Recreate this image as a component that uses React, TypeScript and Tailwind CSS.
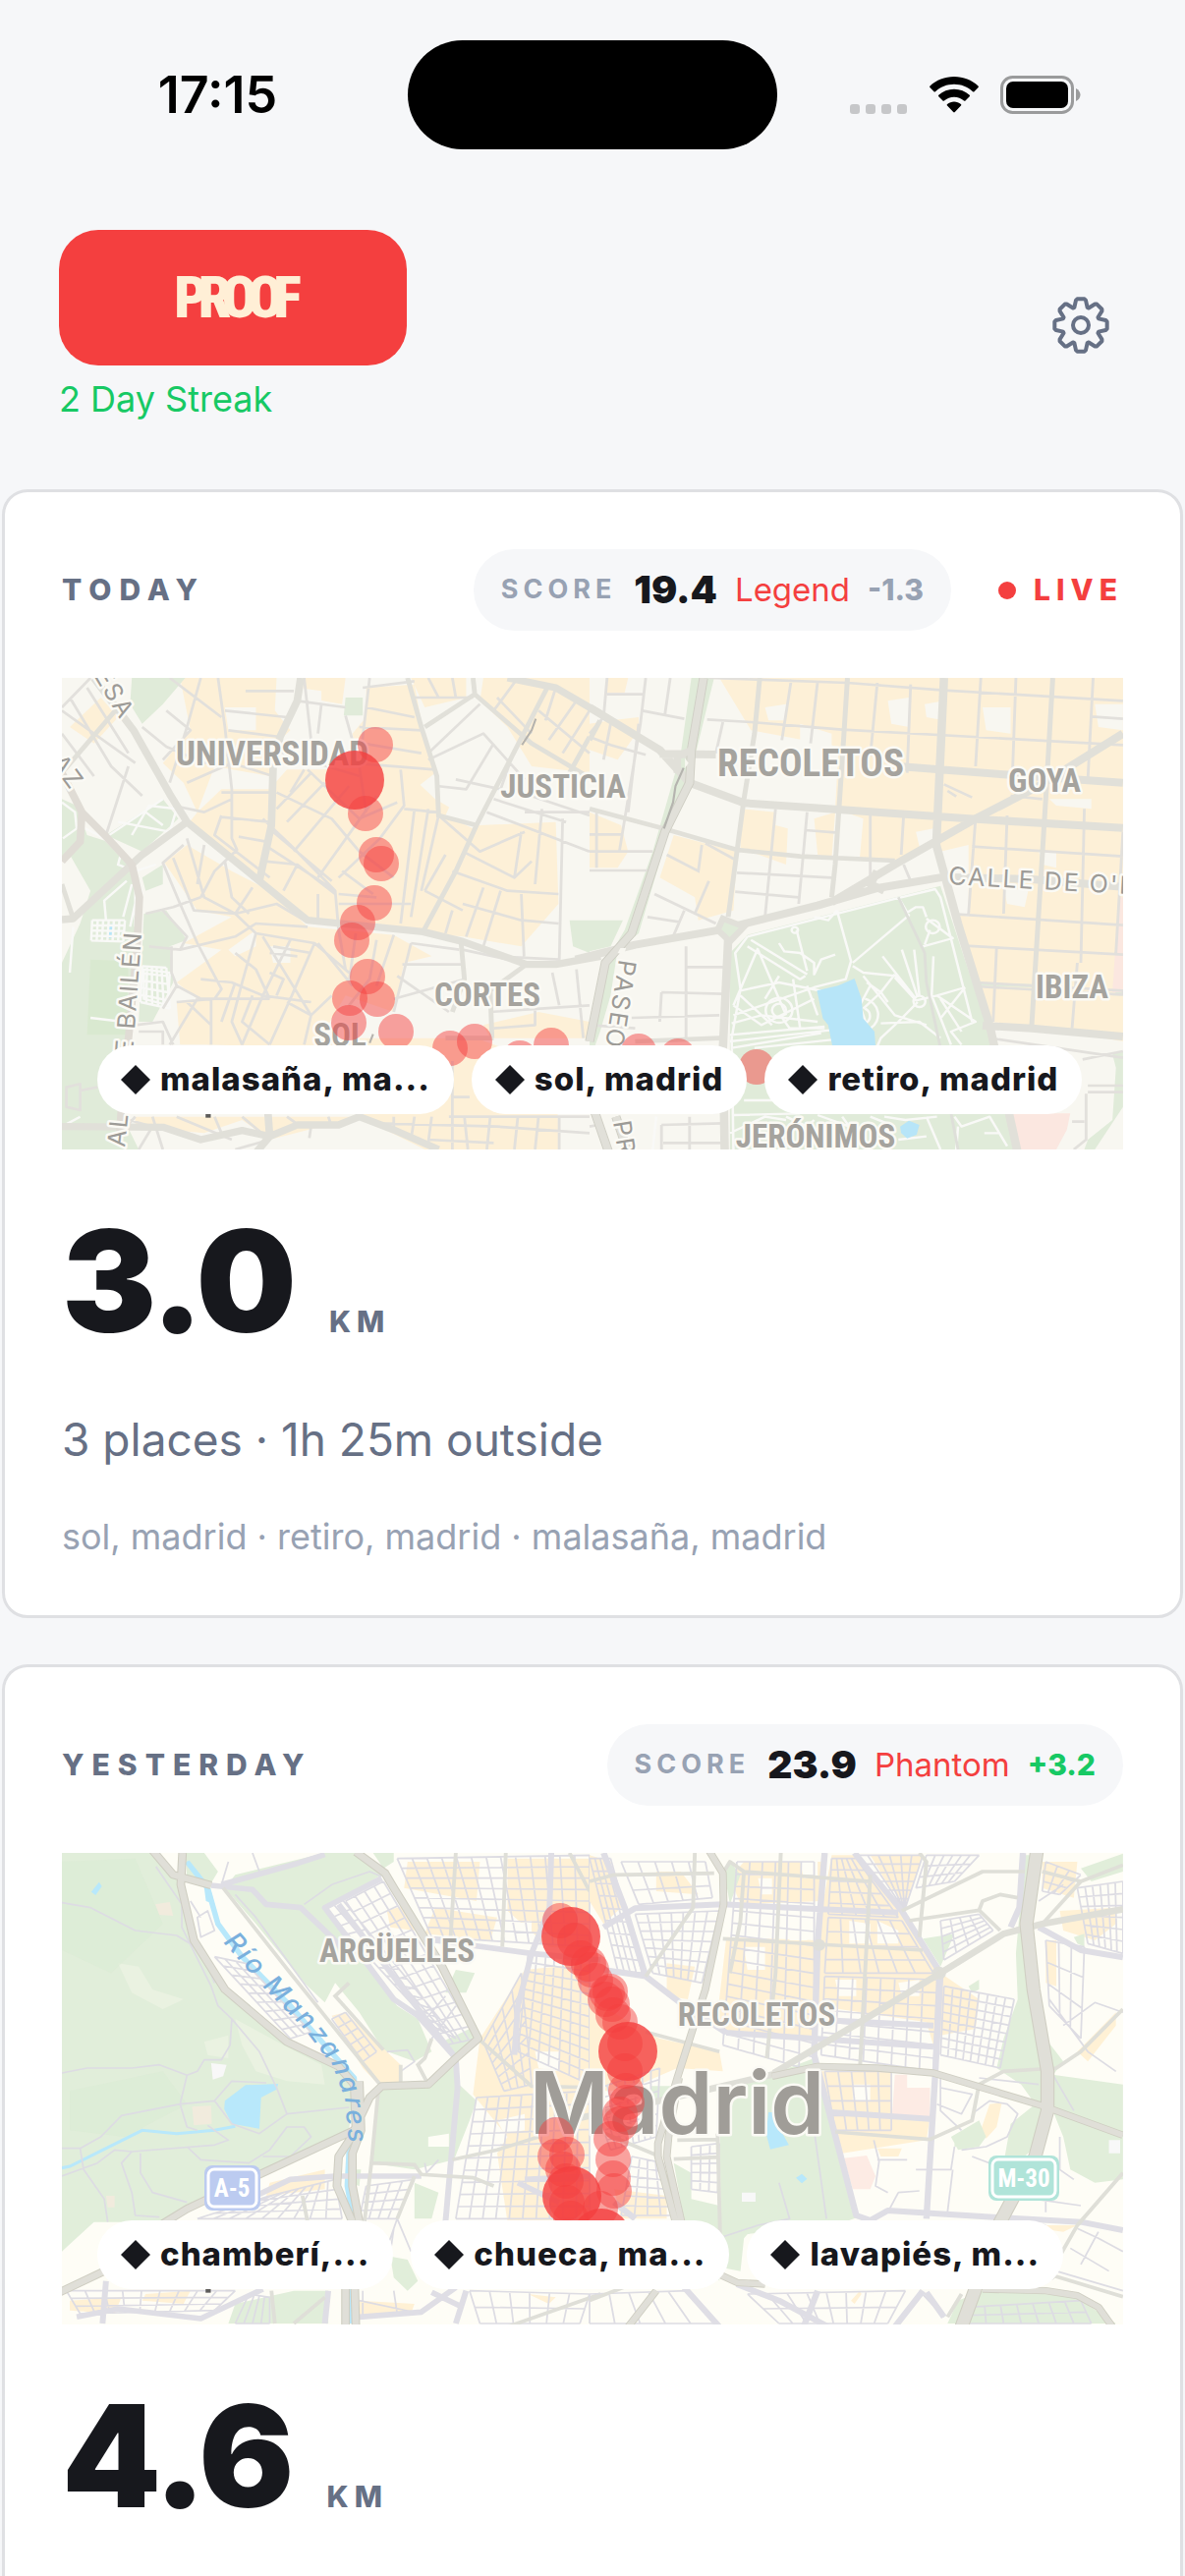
import React from "react";

type Pt = [number, number];
type Dot = [number, number, number];

/* Street grid inside a quadrilateral given clockwise from its top left corner. */
function grid(a: Pt, b: Pt, c: Pt, d: Pt, cols: number, rows: number) {
  const mix = (p: Pt, q: Pt, t: number) =>
    `${Math.round(p[0] + (q[0] - p[0]) * t)} ${Math.round(p[1] + (q[1] - p[1]) * t)}`;
  let out = "";
  for (let i = 0; i <= cols; i++) out += `M${mix(a, b, i / cols)}L${mix(d, c, i / cols)}`;
  for (let j = 0; j <= rows; j++) out += `M${mix(a, d, j / rows)}L${mix(b, c, j / rows)}`;
  return out;
}

function Gear() {
  const tooth: Pt[] = [[-20, -54], [-15, -76], [-11, -80], [11, -80], [15, -76], [20, -54]];
  const pts: string[] = [];
  for (let k = 0; k < 8; k++) {
    const t = (k * Math.PI) / 4;
    for (const [x, y] of tooth)
      pts.push(`${(x * Math.cos(t) - y * Math.sin(t)).toFixed(1)} ${(x * Math.sin(t) + y * Math.cos(t)).toFixed(1)}`);
  }
  return (
    <svg viewBox="-90 -90 180 180" className="size-[60px]" fill="none" stroke="#667085" strokeWidth="12" strokeLinejoin="round">
      <path d={`M${pts.join("L")}Z`} />
      <circle r="24" />
    </svg>
  );
}

const HALO = { stroke: "#fbfaf5", strokeWidth: 5, paintOrder: "stroke", strokeLinejoin: "round" as const };
const DISTRICT = "font-['Liberation_Sans_Narrow','Roboto_Condensed','Liberation_Sans',sans-serif] font-bold";

function District({ x, y, w = 33, children }: { x: number; y: number; w?: number; children: string }) {
  return (
    <text x={x} y={y} fontSize={w} textAnchor="middle" fill="#a5a39e" className={DISTRICT} {...HALO}>
      {children}
    </text>
  );
}

function Street({ id, d, size = 25, children, fill = "#9d9b97" }: { id: string; d: string; size?: number; children: string; fill?: string }) {
  return (
    <>
      <path id={id} d={d} fill="none" />
      <text fontSize={size} fill={fill} className="font-[Inter,sans-serif] tracking-[2px]" {...HALO}>
        <textPath href={`#${id}`}>{children}</textPath>
      </text>
    </>
  );
}

function Trail({ dots }: { dots: Dot[] }) {
  return (
    <g fill="#f43f3f">
      {dots.map(([x, y, r], i) => (
        <circle key={i} cx={x} cy={y} r={r} fillOpacity={r > 20 ? 0.8 : 0.48} />
      ))}
    </g>
  );
}

const CENTER_TRAIL: Dot[] = [
  [319, 68, 18], [309, 138, 18], [298, 104, 30], [320, 180, 18], [325, 189, 18], [318, 229, 18], [301, 249, 18],
  [295, 267, 18], [311, 304, 18], [293, 326, 18], [321, 327, 18], [292, 351, 18], [340, 360, 18], [395, 377, 18],
  [420, 370, 18], [466, 387, 18], [498, 374, 18], [587, 380, 18], [627, 385, 18], [707, 396, 18],
];

const CITY_TRAIL: Dot[] = [
  [507, 69, 18], [522, 89, 18], [518, 85, 30], [528, 107, 18], [536, 113, 18], [539, 119, 18], [543, 130, 18],
  [558, 141, 18], [553, 149, 18], [555, 143, 18], [560, 154, 18], [561, 165, 18], [568, 172, 18], [573, 194, 18], [576, 202, 30],
  [573, 222, 18], [574, 242, 18], [575, 254, 18], [568, 266, 18], [568, 276, 18], [559, 291, 18], [561, 312, 18], [561, 331, 18],
  [562, 344, 18], [548, 362, 18], [503, 287, 18], [502, 309, 18], [514, 307, 18], [510, 322, 18], [513, 334, 18],
  [519, 349, 30], [514, 356, 18], [518, 372, 18], [549, 392, 30],
];

const WEST = "scale(.35075 .33333)";
const EAST = "scale(.35714 .33333)";

function CenterMap() {
  return (
    <svg viewBox="0 0 1080 480" className="block h-auto w-full" role="img" aria-label="Route through central Madrid" fill="none">
      <rect width="1080" height="480" fill="#f8f7f1" />
      <g transform={`translate(-13 -10) ${WEST}`}>
        <g fill="#fdf0d7">
          <path d="M380 30H660L655 130L700 190L640 250V330L480 300L430 440L390 350L330 290L410 190Z" />
          <path d="M60 180L150 90L200 150L130 230Z" />
          <path d="M430 440L500 370L640 370L690 310L790 310L1020 300L1120 400L1250 480L1470 470L1478 720L1370 850L1200 820L1080 810L860 780L740 760L610 650L400 480Z" />
          <path d="M735 30H860L850 110L740 90ZM920 60L1060 50L1090 220L1120 320L1000 420L900 300L880 200L920 150Z" />
          <path d="M1050 30H1210V90L1090 120ZM1260 30H1568V320L1400 300L1330 180L1250 100Z" />
          <path d="M335 595L400 540L530 620L640 680L750 790L1000 815L1110 880L1030 900L1000 1050L860 1000L770 1160L460 1150L430 1010L370 960L500 860L390 840L530 760L430 740Z" />
          <path d="M700 1130H1240L1470 1220L1480 1470H1090L900 1370L640 1440L560 1380L450 1420L250 1400V1370H900Z" />
          <path d="M370 1020L470 1010V1150H380ZM1260 1090L1420 1050L1568 1080V1130H1280Z" />
        </g>
        <g fill="#f8f7f1">
          <path d="M510 120H600V190H520ZM720 60L790 70V140H730ZM1180 380L1260 410L1230 490L1150 450ZM1350 400L1430 390V440L1370 450ZM640 850H700V900H650ZM520 860L600 800V850L540 880Z" />
        </g>
        <g fill="#e0ebd9">
          <path d="M240 30H395L330 110L270 170L235 110ZM860 90H910V145H855ZM330 400L375 460L270 560L165 510Z" />
          <path d="M37 400L80 420L110 510L200 540L260 640L265 780L240 1080L200 1340L260 1470H37V900L90 780L120 680L60 570L37 580Z" />
          <path d="M270 640L330 600V660L280 680ZM275 750L340 740L400 830L350 850L360 960L300 1080L260 1080ZM1510 770H1568V870L1520 850Z" />
        </g>
        <path fill="#d9e9d0" d="M120 890L230 895L225 1120H110Z" />
        <path fill="#b7e5f8" d="M168 785L188 780V822L172 825Z" />
        <path
          stroke="#f9f9f7"
          strokeWidth="7"
          d={
            "M105 490L160 520L250 620L270 690M160 520L330 400M200 470L350 500L370 430L290 420L240 510M280 440L330 480M210 560L200 600L250 620M250 620L310 600M37 410L75 440L80 490L40 520M225 650L160 710L165 770M240 660L215 760M250 660V790M262 660L235 790M70 790L60 930M120 1068L215 1080M275 920L350 930L345 1030L275 1010ZM37 1400L90 1370" +
            grid([125, 770], [220, 770], [215, 835], [122, 832], 6, 4) +
            grid([270, 910], [340, 915], [350, 1040], [265, 1020], 5, 5)
          }
        />
        <path
          stroke="#e2e0dc"
          strokeWidth="8"
          strokeLinejoin="round"
          d={
            "M37 130L250 290M60 90L180 300L270 390M37 200L130 330M120 30L37 120M110 60L230 260M230 300L165 510M350 30L500 150M270 180L340 240L450 290L530 260M340 130L410 190L330 280M440 30L400 180L350 350M490 30L510 180L530 370V520L545 555L480 620L440 700M400 350L530 290L650 330M500 380L640 380M360 420L450 440L530 400M570 70H710M510 130L690 150M520 190L670 210M650 250L900 330M740 30L760 220M790 110L780 200M720 100L860 120M860 145L880 220M930 30L900 300L920 440M920 120L1060 150M910 60L1060 40M900 180L1080 190M910 230L1080 260M880 290L1120 310M750 310L900 460M660 380L820 460L900 560M620 460L700 540L830 680M760 320L660 430M800 350L690 470M870 360L710 560M950 390L780 640M1020 310L1030 420L960 520L840 640M1030 430L1125 440M900 460L1010 410M740 310L700 380M650 500L820 650M500 450L480 510L640 640M500 455L640 470M550 515L630 530M640 550L830 680L840 800M625 590L720 600L680 680M720 600L830 690M780 690V770M840 690L950 700M840 720H1050M900 560L1000 640M850 620L940 690M1060 430L1020 780M1100 430L1050 760M1130 450L1080 680M1150 570L1090 680M1090 680L1200 740M1170 620L1330 680L1478 690M1200 560L1350 640L1400 590M1130 450L1250 560L1380 500M1270 440L1568 560M1290 400L1500 470M1180 340L1310 370L1350 250M1125 360L1210 370L1290 230M1100 280L1260 200L1380 340M1060 90H1230M1100 30L1130 90M1170 30L1180 90M1250 110L1100 260M1300 90L1400 200M1360 30L1290 130M1420 130L1568 260M1470 60L1440 160M1530 100L1450 220M1568 130L1490 260M1370 380L1568 450M1380 440H1568M1370 500L1350 640M1430 430L1410 660M1490 460L1480 900M1200 720L1370 770L1478 780M1170 740L1150 810M1260 670L1210 820M1310 680L1260 850M1370 690L1378 880M1290 880L1480 890" +
            "M400 520L450 700L540 750L600 810L560 960L530 1080L560 1150M390 540L330 595L380 720L430 840L500 980L480 1010L370 1020M360 580L420 740L540 750L660 720L740 770M450 540L430 660M510 590L530 700L580 750M590 670L540 750M280 750L360 730L440 700M330 740L400 820L380 860L290 850M355 850V930L370 970L330 1040M380 860L540 820L600 780L750 790M600 810L770 840L870 930M620 820L760 1060L820 1000M700 830L620 1000L560 1150M770 840L700 1010L640 1150M780 840L880 970M840 800L860 920M890 810L870 960M950 830L930 950L870 1030M1000 815L950 970M540 870L600 920L640 1010M440 950L530 960L620 1000L760 1020M640 930L680 950L660 1000M370 970L440 1010L640 1010M470 1010V1150M430 1010L350 1150M400 1020L470 1090M590 1000L560 1080L640 1150M540 960L500 1080M640 870L720 880M650 850L760 870M690 1020L760 1060L740 1150M250 1090L330 1080L360 1150M260 1110H330V1150M1050 840L1000 1050M1050 840L1190 860M1025 905H1200M1010 940L1160 1050M1205 950L1000 1010M1200 860L1330 890M1280 1050L1568 1030M1410 980V1090L1290 1100M1460 930L1480 1030M1530 920L1550 1130" +
            "M250 1370L190 1440M200 1370L300 1400L260 1470M300 1370L330 1470M370 1370L530 1440M480 1370L500 1420M560 1370L640 1440M690 1370L730 1400M640 1440L540 1470M760 1400L755 1435M810 1370L820 1400M1000 1370V1410M1060 1370L1050 1440M1110 1370L1100 1450M950 1390L1300 1400L1568 1420M1170 1200V1470M1205 1370L1215 1470M1160 1370L1568 1370M1170 1310H1220M1280 1370L1270 1470M1360 1370L1350 1470M1420 1370L1410 1470M1480 1370V1470M1100 1440L1290 1450M50 1280L90 1270V1350L50 1340ZM90 1290L140 1280"
          }
        />
        <path
          stroke="#e1e0d9"
          strokeWidth="22"
          strokeLinejoin="round"
          d="M130 30L245 190L350 385L400 470L610 650L750 770L1085 805L1200 835L1385 905L1470 905L1600 880M730 30L720 100L670 210L650 300L645 480L610 650M400 470L270 570L70 765L37 768M37 1400L330 1402L440 1440L560 1412L640 1430L720 1395L840 1395L900 1370L1000 1410L1130 1470M1330 30L1470 60L1600 140M635 1360L640 1430L600 1480"
        />
        <path
          stroke="#e1e0d9"
          strokeWidth="14"
          d="M1040 30L1080 180L1125 330L1130 450L1240 480M1450 50L1240 480L1180 620L1085 805M1230 30L1235 80L1400 230L1560 330M1235 80L1090 180M1195 835L1205 950L1170 1050M1280 990L1285 1130M1385 905L1280 985M1568 210L1510 320M200 120L37 320M37 660L70 765M1150 1130H1290"
        />
        <path stroke="#e0dcd5" strokeWidth="22" d="M37 320L95 440L170 520L240 600L262 700L255 850L235 1080L210 1340L205 1420M95 440L90 530L37 590" />
        <path stroke="#b5b3ae" strokeWidth="6" d="M1412 155L1400 190L1372 235M940 1118L930 1145" />
        <path fill="#5d5c5a" d="M454 1360H469V1373H454Z" />
      </g>
      <g transform={`translate(537 -10) ${EAST}`}>
        <g fill="#fdf0d7">
          <path d="M370 30H1520V1140L1250 1090L1130 1080L1050 750L985 540L860 590L770 580L780 460L700 430L710 240L460 190Z" />
          <path d="M240 510L420 560L410 740L310 770L300 700L200 640ZM430 430L530 440V480L565 490L560 600L430 550ZM640 460L700 440L690 580L650 570Z" />
          <path d="M50 30H110L100 75H50ZM0 170L60 160L140 150V190L80 280L0 250ZM0 440L90 480L110 560L80 610H0Z" />
        </g>
        <g fill="#f8f7f1">
          <path d="M955 110L1010 100V160L960 150ZM1120 120H1200V200L1130 190ZM1310 400H1430V430L1330 420ZM850 100L910 90V180L860 170ZM600 170L690 200V240H600ZM930 500L980 490V540L940 545ZM1440 110H1520V190L1450 180ZM1180 670L1250 680L1240 730L1190 720ZM1280 560L1330 560V610L1290 600ZM1000 560L1080 540V760L1050 750ZM500 120L560 110V160H510Z" />
        </g>
        <g fill="#e0ebd9">
          <path d="M290 30H355L305 250L225 500L140 810L80 860L60 1000L30 1110L0 1200V1100L45 900L100 800L180 560L260 260Z" />
          <path d="M0 770H95L60 850L0 865ZM450 815L1000 665L1150 1150L1230 1470H400V870ZM1100 960L1260 965V975L1100 970ZM1500 990H1520V1000H1490ZM1490 1180L1520 1170V1340L1440 1470H1410L1420 1440L1490 1380L1500 1220Z" />
        </g>
        <path fill="#fbe7e0" d="M1205 1360H1370L1360 1410L1330 1470H1225ZM1508 700H1520V990H1490Z" />
        <path
          stroke="#f9f9f7"
          strokeWidth="7"
          strokeLinejoin="round"
          d={
            "M450 820L870 705L985 675L1000 700L1090 1080M450 820L415 870L430 980L405 1130L410 1470M705 740L745 895L730 950L640 975L410 1060M750 900L910 755L880 700M900 750L930 730H950L960 760M950 850L1035 825L960 765M955 845L970 800M460 830L620 935M480 855L410 1030M480 860L560 1060M450 850L600 950L615 940M540 840L555 865L600 870L640 900L640 935L660 890L700 875M590 800L620 925M640 760L680 770L705 740M750 910L780 930L875 940L930 1010M870 935L830 990L790 960M780 1040L830 990L850 1020M835 880L930 1010M890 860L935 1005M925 860L940 1000M870 945L930 1015L990 1000L1070 975M800 970L770 1030L790 1090M780 940L870 1060L960 1090M830 1085L940 1080L1000 1130M990 1000L1100 1080L1030 1110L1060 1150M980 880L975 1000L1030 1150M935 1020L880 1080L830 1130L820 1155M1000 1010L1060 1110M1070 975L1000 1070" +
            "M430 985L540 960L680 990M405 1085L490 1060L650 1080M410 1030L490 1090L640 1010M430 1000L520 1090M500 1010L540 940M580 950L600 1100M550 1070L570 1100H670M620 970L650 1060M400 1120L670 1095M400 1140L690 1105M405 1160L660 1115M470 1160L690 1135M410 1365L600 1360M440 1320H560M560 1370L620 1400L640 1380M650 1365L740 1400L720 1370M800 1370L870 1400M840 1370L900 1380L990 1370M1040 1370L1060 1400L1140 1370L1190 1460M1125 1420H1165M1050 1400L1045 1470M960 1370L1000 1470M880 1440L960 1430M190 1370L180 1470M400 1420L500 1370L560 1380"
          }
        />
        <g stroke="#f9f9f7" strokeWidth="7">
          <circle cx="940" cy="1018" r="17" />
          <circle cx="978" cy="790" r="20" />
          <circle cx="540" cy="1045" r="20" />
          <circle cx="540" cy="1045" r="38" />
          <circle cx="585" cy="800" r="9" />
          <path d="M785 1040A25 25 0 0 1 785 1085M785 1010A50 50 0 0 1 800 1100" />
        </g>
        <path fill="#b7e5f8" d="M648 985L708 970L755 948L775 1010L780 1070L812 1110L815 1155H692L680 1090L665 1070ZM885 1400L910 1382L940 1395L932 1425L905 1436L888 1420Z" />
        <path
          stroke="#e2e0dc"
          strokeWidth="8"
          d={
            "M340 30L735 45L1010 68L1520 100M335 157L460 165L720 188L1520 235M575 35L548 220M650 40L630 230M820 45L800 270M915 50L905 320M1115 30L1100 300M1215 30L1205 330M1435 30L1420 340M530 430L500 760M620 440L596 720M800 440V640M895 450L888 570M420 625L690 640M415 683L595 700M615 495L700 502M380 165L360 260M1190 450L1180 750M1100 460L1080 750M1410 430L1400 900M1520 500L1500 870M1090 545L1520 575M1050 752L1520 785M1070 848L1520 875M1160 850L1150 1080M1390 900L1375 1100M1200 390L1290 400M1010 355L1090 395M1020 375L1045 392M1430 148L1520 155M320 540L310 620L220 570M330 535L415 585M340 650L300 750M185 690L360 780M165 760L255 775M270 740L240 815M0 560H180M0 618H165M0 508H95M20 440V610M50 30L40 150L0 200M160 30L145 170L85 560M230 30L215 140M50 80H155M150 130L270 155M0 210L60 235L160 265M60 170L40 280M140 170L110 440M275 850V1140M275 913H385M205 990L380 995M205 990L200 1080M120 1068L370 1060M0 1090L130 1100M205 1395L380 1390M210 1450H380M205 1395V1470M285 1370V1470M0 1400L25 1395M1405 1195L1520 1170M1420 1275H1520M1420 1295H1520M1415 1300V1440L1380 1470M1375 1385H1410M895 600L915 650M1140 1130L1520 1190" +
            grid([1100, 960], [1520, 985], [1520, 997], [1100, 972], 1, 1)
          }
        />
        <path stroke="#dedfd9" strokeWidth="8" d="M880 700L955 870L960 960L1000 1160M1030 1360L1050 1470" />
        <path stroke="#e1e0d9" strokeWidth="14" d="M485 30L470 200L440 400L395 760M735 30L722 250L700 600L690 700M1320 30L1300 400L1260 1090M0 430L210 490L420 555L600 575L870 588M0 220L30 160M130 1140L370 1130" />
        <path
          stroke="#e1e0d9"
          strokeWidth="24"
          strokeLinejoin="round"
          d="M0 120L200 250L285 350L440 412L710 432L1080 460L1520 488M200 262L360 264M880 300L1180 325L1520 350M-40 890L130 845L370 800L650 725L820 672L1010 638L1260 645L1520 668M690 715L870 600L1100 460L1280 360L1520 200M1010 30L988 540L1050 780L1140 1090L1220 1480M395 830L380 1160L385 1470M1120 1092L1260 1100L1520 1125M820 620L800 660L840 680"
        />
        <path stroke="#cfcec4" strokeWidth="26" d="M325 30L290 250L285 350L215 500L120 810L45 900L0 1140M0 1310L55 1480M75 1370L110 1480" />
        <path stroke="#e1e0d9" strokeWidth="21" d="M325 30L290 250L285 350L215 500L120 810L45 900L0 1140M0 1310L55 1480M75 1370L110 1480M250 270L290 250M250 320V270" />
        <path fill="#e0ebd9" stroke="#e1e0d9" strokeWidth="18" d="M365 800L380 765L440 790L400 835Z" />
        <path stroke="#b5b4af" strokeWidth="6" d="M268 305L245 360L238 410L212 490" />
        <path fill="#f8f7f1" d="M88 855H104L98 875L80 870ZM272 275L282 290L272 305Z" />
      </g>
      <District x={214} y={89} w={35}>UNIVERSIDAD</District>
      <District x={510} y={122}>JUSTICIA</District>
      <District x={762} y={100} w={39}>RECOLETOS</District>
      <District x={1000} y={116}>GOYA</District>
      <District x={1028} y={326}>IBIZA</District>
      <District x={433} y={334}>CORTES</District>
      <District x={283} y={375}>SOL</District>
      <District x={767} y={478}>JERÓNIMOS</District>
      <Street id="odonnell" d="M902 210L1120 222">CALLE DE O'DONNELL</Street>
      <Street id="paseo" d="M567 286L549 400">PASEO</Street>
      <Street id="prado" d="M561 452L575 540">PRADO</Street>
      <Street id="bailen" d="M72 384L84 220">E BAILÉN</Street>
      <Street id="bailen-south" d="M64 478L72 400">AL</Street>
      <Street id="princesa" d="M22 -20L86 88">CESA</Street>
      <Street id="ferraz" d="M-12 86L20 130">AZ</Street>
      <Trail dots={CENTER_TRAIL} />
    </svg>
  );
}

function CityMap() {
  return (
    <svg viewBox="0 0 1080 480" className="block h-auto w-full" role="img" aria-label="Route across Madrid" fill="none">
      <rect width="1080" height="480" fill="#fefdf6" />
      <g transform={`translate(-13 -11) ${WEST}`}>
        <g fill="#e1eeda">
          <path d="M37 33H310L380 120L400 230L440 330L500 450L690 610L830 690L885 740L870 880L600 1010L330 1160H130L37 1250Z" />
          <path d="M395 33H450L490 90L470 125L400 110ZM540 100L800 33H890L965 100L800 200L890 340L1010 500L1070 540L1110 640L1060 670L970 635L900 520L830 430L800 490L740 430L600 250L510 140Z" />
          <path d="M960 750L1100 740L1180 680L1190 740L1240 790L1220 850L1175 970L1060 1000L935 980ZM1140 610L1240 560V600L1180 650ZM1060 1040L1130 1070L1110 1150H1060ZM710 1370H810V1470H520L540 1410ZM990 1265L1040 1275L1070 1340L1040 1370L1000 1330ZM1180 390L1235 400L1210 460H1150Z" />
          <path d="M940 33H1000V60L970 80ZM885 1000L905 1000L900 1050L870 1040Z" />
        </g>
        <path fill="#eaf2e1" d="M540 540L680 620L790 680L800 740L690 730L600 700L560 620ZM200 370L260 380L300 450L390 480L330 510L240 460ZM450 610L520 590V660L460 650Z" />
        <path fill="#d9ebd3" fillOpacity=".5" d="M37 60L250 50L330 250L180 400L37 330ZM60 760L330 700L400 800L220 900L60 880Z" />
        <g fill="#fff1d5">
          <path d="M1040 60H1250L1240 180L1030 140ZM1120 200L1300 230L1280 300L1090 280ZM1330 50H1568V330L1450 320L1330 210ZM980 210L1040 190L1060 270L990 260Z" />
          <path d="M1250 600L1330 470L1380 390L1568 370V1160H1330L1300 950L1330 900L1230 770Z" />
          <path d="M820 530L860 520L1020 680V735H950L910 690ZM640 1040L800 1000V1060L630 1080ZM280 1380L410 1370L390 1410L270 1400ZM60 1400L210 1390L190 1440L60 1430ZM900 1400L1060 1410L1050 1440L900 1450ZM1390 1380L1470 1390L1450 1410Z" />
        </g>
        <path fill="#fefdf6" d="M1350 250L1400 240V330L1360 320ZM1410 640L1480 640V700L1420 690ZM1300 850L1380 830V880L1320 890ZM1100 900L1160 890V930H1100Z" />
        <path fill="#f1ebdd" d="M308 190L350 183L360 225L320 222ZM415 808L470 805L472 860L420 865ZM165 1080L190 1080V1115H170Z" />
        <path fill="#f8f8f8" d="M470 675L515 680L505 715L475 725Z" />
        <g stroke="#b8e8fb">
          <path strokeWidth="16" strokeLinejoin="round" d="M400 60L460 140L490 250L560 350L700 500L800 620L885 720L890 860L870 950L865 1050L885 1160L880 1300L876 1470" />
          <path strokeWidth="9" d="M37 995L60 990L270 880L370 890L480 880L540 868" />
          <path fill="#b8e8fb" stroke="none" d="M510 790L570 742L665 738L660 755L615 780L610 875L530 860L508 815ZM122 152L145 122L153 135L135 162ZM398 55L425 85L470 150L480 190L455 180L450 140Z" />
        </g>
        <path
          stroke="#dddce3"
          strokeWidth="5"
          strokeLinejoin="round"
          d={
            "M37 185L120 200L250 270L370 285L440 330M310 75L385 190V260L470 440L490 500L530 540L525 620L500 665L450 665L430 700L400 712L320 680L240 690L110 690L37 705M530 540L610 640L660 750L690 830L870 810M400 712L380 800L210 835L150 900L90 935L37 935M380 800L480 790L530 730L630 735M380 800L400 870L430 880M480 790L530 860L610 890L690 830M37 1020L140 980L190 940L240 945L480 925L520 910L460 865M240 945L210 980L240 1070L250 1140L320 1145M265 950V1010L300 1070L400 1100M90 935L100 1000L160 1090L170 1160M400 930L440 970L580 980L640 940L690 870L740 870L760 900L700 960L620 960M540 160L600 230L780 490M740 190L820 130L930 90L965 105M500 130L520 60M590 33L610 90M430 230L460 210L480 270L440 290ZM440 330L480 430M410 180L440 230" +
            grid([800, 205], [850, 175], [1180, 600], [1110, 560], 2, 14) +
            grid([860, 180], [970, 120], [1240, 600], [1150, 620], 4, 13) +
            grid([1010, 50], [1568, 40], [1568, 320], [1110, 290], 13, 8) +
            grid([1390, 340], [1568, 360], [1568, 740], [1360, 640], 7, 11) +
            grid([1260, 610], [1370, 400], [1400, 740], [1320, 760], 4, 7) +
            grid([1240, 780], [1568, 760], [1568, 1150], [1180, 1150], 10, 10) +
            grid([480, 350], [570, 370], [760, 580], [700, 600], 3, 9) +
            grid([820, 540], [860, 520], [950, 640], [910, 670], 2, 5) +
            grid([640, 1080], [830, 1030], [850, 1150], [430, 1150], 9, 4) +
            grid([50, 1370], [540, 1370], [480, 1430], [90, 1440], 9, 3) +
            grid([920, 1050], [1060, 1030], [1010, 1150], [900, 1150], 4, 4) +
            grid([1220, 1370], [1568, 1380], [1540, 1470], [1250, 1470], 6, 2) +
            grid([580, 1380], [640, 1390], [640, 1470], [540, 1470], 4, 1) +
            "M980 640L1040 635L1060 670L1020 700M1085 550L1150 470M1110 600L1180 500M900 1400L1080 1440M910 1370V1450M1000 1370L1010 1440M1010 1150L960 1300M1010 1150L1050 1250M1000 1180L985 1290M1090 980L1095 1010L1130 970"
          }
        />
        <path
          stroke="#dfdee5"
          strokeWidth="17"
          strokeLinejoin="round"
          d="M470 132L590 145L630 190L730 200L820 290L870 350M965 110L800 200L1000 480L1070 530L1180 660L1185 750L1150 1160M840 190L1180 660M1457 33L1452 200L1400 340L1360 500L1350 650M1120 300L1400 340L1600 360M500 130L720 65L800 38M600 1080L700 1030L830 1020L1080 1020M80 1450L200 1425L440 1455L530 1410L620 1365M165 1340L155 1470M810 1370L800 1470M900 1450L1080 1435L1180 1360M1210 1370L1180 1470M1110 1375L1190 1415M1380 1030L1568 1020M1360 1040L1480 1100"
        />
        <path
          stroke="#dfdfd8"
          strokeWidth="11"
          d="M505 140L700 400L960 740M1245 600L1400 745L1600 750M1180 33L1165 290M1325 33L1315 320M1510 33L1568 150M870 430L830 470L970 635M1110 600L1090 660L1070 680L1100 740M1020 735V680M955 760L935 980L915 1160M935 980L1060 985L1080 1015L1230 1025L1290 1050M1060 1020L1010 1150M1170 970L1300 940L1420 900M645 1370L655 1470M735 1080L750 1160M1600 1380L1330 1480M710 1470L800 1390"
        />
        {["#cfcec2", "#e0dfd8"].map((c, i) => (
          <path
            key={c}
            stroke={c}
            strokeWidth={i ? 19 : 25}
            strokeLinejoin="round"
            d="M300 25L360 100L470 132M387 33L382 130L420 300L510 450L690 610L840 685L885 740L890 880L840 960L835 1050L880 1160L860 1300V1480M30 1375L200 1290M330 1165L400 1120L600 1020L885 880L930 780L965 745L1100 740L1180 660L1245 600L1140 380L1000 140L975 95L890 30M900 730L905 880L880 950V1050L900 1160L885 1300L890 1480"
          />
        ))}
        <path fill="#5d5c5a" d="M454 1360H469V1376H454Z" />
      </g>
      <g transform={`translate(537 -11) ${EAST}`}>
        <g fill="#fff1d5">
          <path d="M440 60H660V180L430 190L400 110ZM690 40H770L890 220L1000 400L1110 480L1100 570L1000 590L985 640L960 550L650 500L640 600L360 570L390 290L650 300L660 215Z" />
          <path d="M540 380H640V590L540 580ZM660 700H860V830L970 840L960 910L720 950L690 830ZM190 90H260L310 160L190 150ZM0 40L60 60L90 200L40 250L0 180ZM800 40H950L900 190L850 130Z" />
          <path d="M0 480L200 600L370 640L380 700L250 690L100 760L0 760ZM70 1060L220 1080V1150H90ZM1290 60H1390L1380 170L1290 140ZM1300 300H1330V440L1300 430ZM1140 800L1175 795L1160 870L1130 905L1115 880ZM1390 640L1500 520L1500 560L1420 670ZM745 1400L770 1370L775 1380L755 1410ZM1220 1170L1390 1170L1350 1190ZM400 400H440V580H390ZM220 370L300 380L280 480L220 470ZM1340 210L1500 200V250L1440 300L1350 270ZM820 935H890L880 960H830Z" />
        </g>
        <path fill="#fefdf6" d="M480 110H520V160H490ZM560 240H620V300H570ZM740 240L800 250V310H740ZM700 420H760V470H710ZM440 320H500V390H450ZM880 430L940 420V470H890ZM600 60H650V110H610ZM820 240L880 270V310H820ZM750 740H800V790H750Z" />
        <g fill="#e1eeda">
          <path d="M370 770L640 660L765 1145L700 1170L375 1205ZM240 980L290 1010V1090L370 1110V1340L270 1160ZM175 745H235V800L180 790ZM400 60L430 100L400 190L385 100Z" />
          <path d="M1240 40H1260L1230 260L1300 600L1350 670L1300 740V900L1240 960L1180 980L1200 860L1270 800L1230 740L1160 690L1180 600L1220 480L1215 340Z" />
          <path d="M1320 710L1520 740V1030L1440 1040L1370 1000L1350 900L1320 820ZM950 295L1040 280L1000 380ZM1400 80L1520 35V90L1430 120ZM1080 440L1110 420V450L1090 460ZM1040 900L1120 880L1100 930L1040 930ZM380 1205L480 1160L440 1210L430 1310L380 1300ZM1120 1370L1380 1385L1500 1470H1020L1050 1400ZM1030 900L1110 850L1130 900L1110 930L1050 940ZM1380 290L1410 280V320L1390 310Z" />
        </g>
        <path fill="#fdebe4" d="M870 710H905V750H970V838H862ZM725 965L790 957L815 1020L800 1060H750Z" />
        <path fill="#b8e8fb" d="M510 825H545L550 890L568 925L515 938L503 890ZM588 1025L605 1013L620 1028L605 1042Z" />
        <path fill="#f8f8f8" d="M434 1070H473V1098H434ZM1480 910H1512V950H1480Z" />
        <path
          stroke="#dddce3"
          strokeWidth="5"
          strokeLinejoin="round"
          d={
            grid([420, 60], [640, 60], [640, 700], [380, 620], 6, 15) +
            grid([690, 50], [760, 50], [880, 230], [680, 220], 5, 5) +
            grid([680, 230], [890, 240], [980, 400], [670, 400], 6, 4) +
            grid([670, 410], [990, 420], [980, 700], [660, 650], 8, 7) +
            grid([670, 700], [860, 700], [860, 880], [700, 880], 5, 4) +
            grid([760, 40], [950, 40], [900, 200], [890, 200], 6, 6) +
            grid([960, 40], [1110, 40], [1040, 120], [930, 140], 6, 3) +
            grid([90, 60], [330, 60], [350, 170], [140, 190], 5, 3) +
            grid([130, 220], [370, 210], [320, 430], [180, 400], 7, 7) +
            grid([0, 50], [60, 50], [150, 400], [80, 390], 4, 9) +
            grid([1010, 440], [1210, 480], [1170, 690], [1000, 650], 8, 8) +
            grid([1000, 240], [1110, 220], [1150, 270], [1010, 360], 4, 5) +
            grid([1300, 60], [1400, 100], [1340, 160], [1290, 150], 3, 3) +
            grid([1390, 140], [1520, 120], [1520, 340], [1420, 310], 6, 6) +
            grid([1300, 300], [1410, 320], [1400, 600], [1310, 500], 3, 3) +
            grid([0, 760], [200, 690], [190, 900], [60, 940], 8, 6) +
            grid([120, 960], [210, 980], [240, 1140], [90, 1140], 4, 6) +
            grid([290, 930], [370, 920], [365, 1070], [290, 1060], 3, 5) +
            grid([1080, 1420], [1400, 1400], [1430, 1470], [1080, 1470], 7, 2) +
            grid([450, 1380], [900, 1370], [850, 1470], [540, 1470], 8, 2) +
            grid([0, 1380], [280, 1370], [360, 1470], [0, 1470], 5, 1) +
            "M1000 720V820L1060 880M1000 750L1090 770L1060 830L990 800M1110 720L1280 740M1090 830L1140 790L1190 800L1220 830L1190 900L1130 930L1060 940M1320 710L1380 820M1340 900V1000L1380 1030M1090 960L1140 980M820 970H905M810 910L825 975L815 1050L850 1070M930 1000H1030L1040 930M1035 1000L1020 1130M880 1070L940 1065M880 1070L855 1120M1270 1090L1400 1110M1300 1090V1130M1390 1180L1450 1210L1520 1250M1370 1240L1480 1310M1450 1190L1400 1290M1330 1310L1520 1370M1310 480L1420 640L1500 700M1350 560L1440 490L1520 520M540 1040L570 1150L480 1170L380 1205M640 880L675 1150M1280 180L1350 130M940 1370L1010 1450M1300 1170L1230 1150"
          }
        />
        <path
          stroke="#dfdee5"
          strokeWidth="18"
          strokeLinejoin="round"
          d="M40 260L130 202L380 190L660 205L880 215M670 33L650 310L640 650L760 1140L800 1155L850 1125L1150 1145L1400 1160L1520 1185M755 33L890 210L1000 400L985 710L960 1150M390 582L640 600L980 625M700 545L980 560M40 33L100 200L160 410L270 500L390 582M40 390L160 410M690 825L970 845M1235 33L1225 200L1200 260M1280 260L1400 330L1520 352M420 1350L540 1400L680 1480M270 1360L370 1480M650 1370L610 1480M950 1370L870 1480M960 1375L1010 1450M70 1100L130 1150"
        />
        <circle cx="654" cy="314" r="18" fill="#dfdfda" />
        <circle cx="996" cy="400" r="20" fill="#dfdfda" />
        <path
          stroke="#dfdfd8"
          strokeWidth="11"
          strokeLinejoin="round"
          d="M300 33L295 200L160 410M0 120L70 100L355 95M380 95L400 60L440 90L800 120M440 90L430 240L400 400M545 33L530 400L505 660M800 100L785 400L770 700M380 295L650 312L950 330M700 885L970 908L1090 850L1110 740L1180 700L1330 690L1400 640L1520 510M940 33L960 60L940 290M910 240L1110 208L1170 270M1110 208L1120 180L1170 160L1220 170M890 210L1120 90L1240 90M1290 90L1400 120L1520 70M1400 120L1290 250M160 580L370 640M250 910L365 908M240 968L370 962M365 890L375 1330M0 870L200 960M1520 1010L1390 1170L1310 1320L1520 1388M1180 280L1225 262M1020 1450L1060 1380M0 1400L120 1350"
        />
        <path stroke="#dfdfd8" strokeWidth="20" d="M525 705L770 550L1000 400L1180 280L1290 250L1520 205M-60 850L200 790L540 705" />
        {["#cfcec2", "#e0dfd8"].map((c, i) => (
          <g key={c} stroke={c} strokeLinejoin="round">
            <path
              strokeWidth={i ? 17 : 22}
              d="M340 25L380 95L382 190L330 450L250 720L195 920V960L245 1160M255 720L225 900L220 960L262 1160M520 715L650 685L820 690L980 705L1290 805L1520 895M350 1310L420 1345L500 1350M190 1370L110 1480M1120 1365L1300 1370L1390 1385L1450 1420L1490 1480"
            />
            <path strokeWidth={i ? 34 : 40} d="M1275 25L1245 250L1265 450L1305 700V820L1270 960L1170 1160L1060 1480" />
          </g>
        ))}
        <circle cx="1315" cy="1324" r="10" fill="#fefdf6" stroke="#dfdfd8" strokeWidth="6" />
      </g>
      <District x={341} y={111}>ARGÜELLES</District>
      <District x={707} y={176}>RECOLETOS</District>
      <path id="manzanares" d="M164 91L204 136L248 181L276 218L288 250L294 320" />
      <text fontSize="27" fill="#7ab0dd" className="font-[Inter,sans-serif] font-medium italic tracking-[3px]">
        <textPath href="#manzanares">Río Manzanares</textPath>
      </text>
      <text x="626" y="286" fontSize="88" textAnchor="middle" fill="#a09d98" className="font-[Inter,sans-serif] font-semibold" {...HALO}>
        Madrid
      </text>
      <g className={DISTRICT} fontSize="25" textAnchor="middle">
        <rect x="145" y="318" width="57" height="46" rx="8" fill="#bccbf0" />
        <rect x="149" y="322" width="49" height="38" rx="6" stroke="#fff" strokeWidth="3" />
        <text x="173" y="350" fill="#fff">A-5</text>
        <rect x="943" y="308" width="72" height="46" rx="8" fill="#b0e4d9" />
        <rect x="947" y="312" width="64" height="38" rx="6" stroke="#fff" strokeWidth="3" />
        <text x="979" y="340" fill="#fff">M-30</text>
      </g>
      <Trail dots={CITY_TRAIL} />
    </svg>
  );
}

function Chip({ children }: { children: string }) {
  return (
    <li className="flex h-[70px] items-center gap-[10px] rounded-full bg-white px-6 text-[33px] font-extrabold tracking-[1px] whitespace-nowrap text-[#17181d]">
      <svg viewBox="0 0 30 30" className="size-[30px] shrink-0" aria-hidden="true">
        <path d="M15 0L30 15L15 30L0 15Z" fill="#17181d" />
      </svg>
      {children}
    </li>
  );
}

type DayProps = {
  title: string;
  score: string;
  rank: string;
  delta: string;
  up?: boolean;
  live?: boolean;
  map: React.ReactNode;
  chips: string[];
  km: string;
  className: string;
  children?: React.ReactNode;
};

function DayCard({ title, score, rank, delta, up, live, map, chips, km, className, children }: DayProps) {
  return (
    <section className={`mx-[2px] border-[3px] border-[#dfe0e3] bg-white p-[58px] ${className}`}>
      <header className="flex items-center">
        <h2 className="mr-auto text-[30px] font-extrabold tracking-[8px] text-[#667085]">{title}</h2>
        <div className="flex h-[83px] items-center gap-[18px] rounded-full bg-[#f6f7f9] px-7">
          <span className="text-[27px] font-bold tracking-[5px] text-[#98a2b3]">SCORE</span>
          <span className="text-[39px] font-black text-[#17181d]">{score}</span>
          <span className="text-[33px] text-[#f43f3f]">{rank}</span>
          <span className={up ? "text-[30px] font-extrabold text-[#17c964]" : "text-[30px] font-extrabold text-[#98a2b3]"}>{delta}</span>
        </div>
        {live && (
          <p className="ml-12 flex items-center gap-[18px] text-[30px] font-extrabold tracking-[6px] text-[#f43f3f]">
            <span className="size-[18px] rounded-full bg-[#f43f3f]" />
            LIVE
          </p>
        )}
      </header>
      <div className="relative mt-12">
        {map}
        <ul className="absolute inset-x-9 bottom-9 flex gap-[18px]">
          {chips.map((c) => (
            <Chip key={c}>{c}</Chip>
          ))}
        </ul>
      </div>
      <p className="mt-[62px] flex items-baseline gap-9 text-[#17181d]">
        <span className="text-[144px] leading-[144px] font-black tracking-[-3px]">{km}</span>
        <span className="text-[30px] font-extrabold tracking-[6px] text-[#667085]">KM</span>
      </p>
      {children}
    </section>
  );
}

export default function App() {
  return (
    <main className="flex h-screen flex-col overflow-hidden bg-[#f6f7f9] font-[Inter,'Noto_Sans',sans-serif]">
      <div className="mt-[41px] grid shrink-0 grid-cols-[1fr_376px_1fr] items-center">
        <time className="pl-7 text-center text-[52px] font-semibold text-black">17:15</time>
        <div className="h-[111px] rounded-full bg-black" />
        <div className="flex items-center justify-center gap-[22px] pr-8">
          <svg viewBox="0 0 59 38" className="h-[38px] w-[59px]" fill="#c6c7c9" aria-hidden="true">
            <rect y="28" width="10" height="10" rx="3" />
            <rect x="16" y="28" width="10" height="10" rx="3" />
            <rect x="32" y="28" width="10" height="10" rx="3" />
            <rect x="48" y="28" width="10" height="10" rx="3" />
          </svg>
          <svg viewBox="0 0 50 37" className="h-[37px] w-[50px]" aria-hidden="true">
            <path d="M25 0C34.500 0 43 3.500 49.500 9.500C50 10 50 10.600 49.600 11L45.500 15.200C45 15.700 44.400 15.700 44 15.200C39 10.500 32.300 7.800 25 7.800C17.700 7.800 11 10.500 6 15.200C5.600 15.700 5 15.700 4.500 15.200L.4 11C0 10.600 0 10 .5 9.500C7 3.500 15.500 0 25 0Z" />
            <path d="M25 12.800C31 12.800 36.500 15 40.700 18.700C41.200 19.200 41.200 19.800 40.700 20.300L36.500 24.500C36.100 24.900 35.500 24.900 35 24.500C32.300 22.200 28.800 20.700 25 20.700C21.200 20.700 17.700 22.200 15 24.500C14.500 24.900 13.900 24.900 13.500 24.500L9.300 20.300C8.800 19.800 8.800 19.200 9.300 18.700C13.500 15 19 12.800 25 12.800Z" />
            <path d="M25 25.500C27.600 25.500 30 26.400 31.900 27.900C32.400 28.300 32.400 29 32 29.400L25.800 36C25.300 36.500 24.700 36.500 24.200 36L18 29.400C17.600 29 17.600 28.300 18.100 27.900C20 26.400 22.400 25.500 25 25.500Z" />
          </svg>
          <svg viewBox="0 0 82 39" className="h-[39px] w-[82px]" aria-hidden="true">
            <rect x="1.500" y="1.500" width="72" height="36" rx="11" fill="none" stroke="#9a9b9c" strokeWidth="3" />
            <rect x="6" y="6" width="63" height="27" rx="7" />
            <path d="M77 13C80 14.500 81.500 17 81.500 19.500S80 24.500 77 26Z" fill="#9a9b9c" />
          </svg>
        </div>
      </div>

      <header className="mt-[82px] flex shrink-0 items-center justify-between px-[60px]">
        <div>
          <button
            type="button"
            className="flex h-[138px] w-[354px] items-center justify-center rounded-[40px] bg-[#f43f3f] font-['Liberation_Sans_Narrow','Roboto_Condensed','Liberation_Sans',sans-serif] text-[60px] font-black tracking-[-10px] text-[#ffefd6]"
          >
            PROOF
          </button>
          <p className="mt-3 text-[36px] leading-[44px] text-[#17c964]">2 Day Streak</p>
        </div>
        <button type="button" aria-label="Settings" className="p-4">
          <Gear />
        </button>
      </header>

      <DayCard
        title="TODAY"
        score="19.4"
        rank="Legend"
        delta="-1.3"
        live
        map={<CenterMap />}
        chips={["malasaña, ma...", "sol, madrid", "retiro, madrid"]}
        km="3.0"
        className="mt-[70px] shrink-0 rounded-[26px]"
      >
        <p className="mt-[60px] text-[46px] leading-[58px] text-[#667085]">3 places · 1h 25m outside</p>
        <p className="mt-12 text-[36px] leading-[44px] text-[#98a2b3]">sol, madrid · retiro, madrid · malasaña, madrid</p>
      </DayCard>

      <DayCard
        title="YESTERDAY"
        score="23.9"
        rank="Phantom"
        delta="+3.2"
        up
        map={<CityMap />}
        chips={["chamberí,...", "chueca, ma...", "lavapiés, m..."]}
        km="4.6"
        className="mt-[47px] flex-1 rounded-t-[26px] border-b-0"
      />
    </main>
  );
}
